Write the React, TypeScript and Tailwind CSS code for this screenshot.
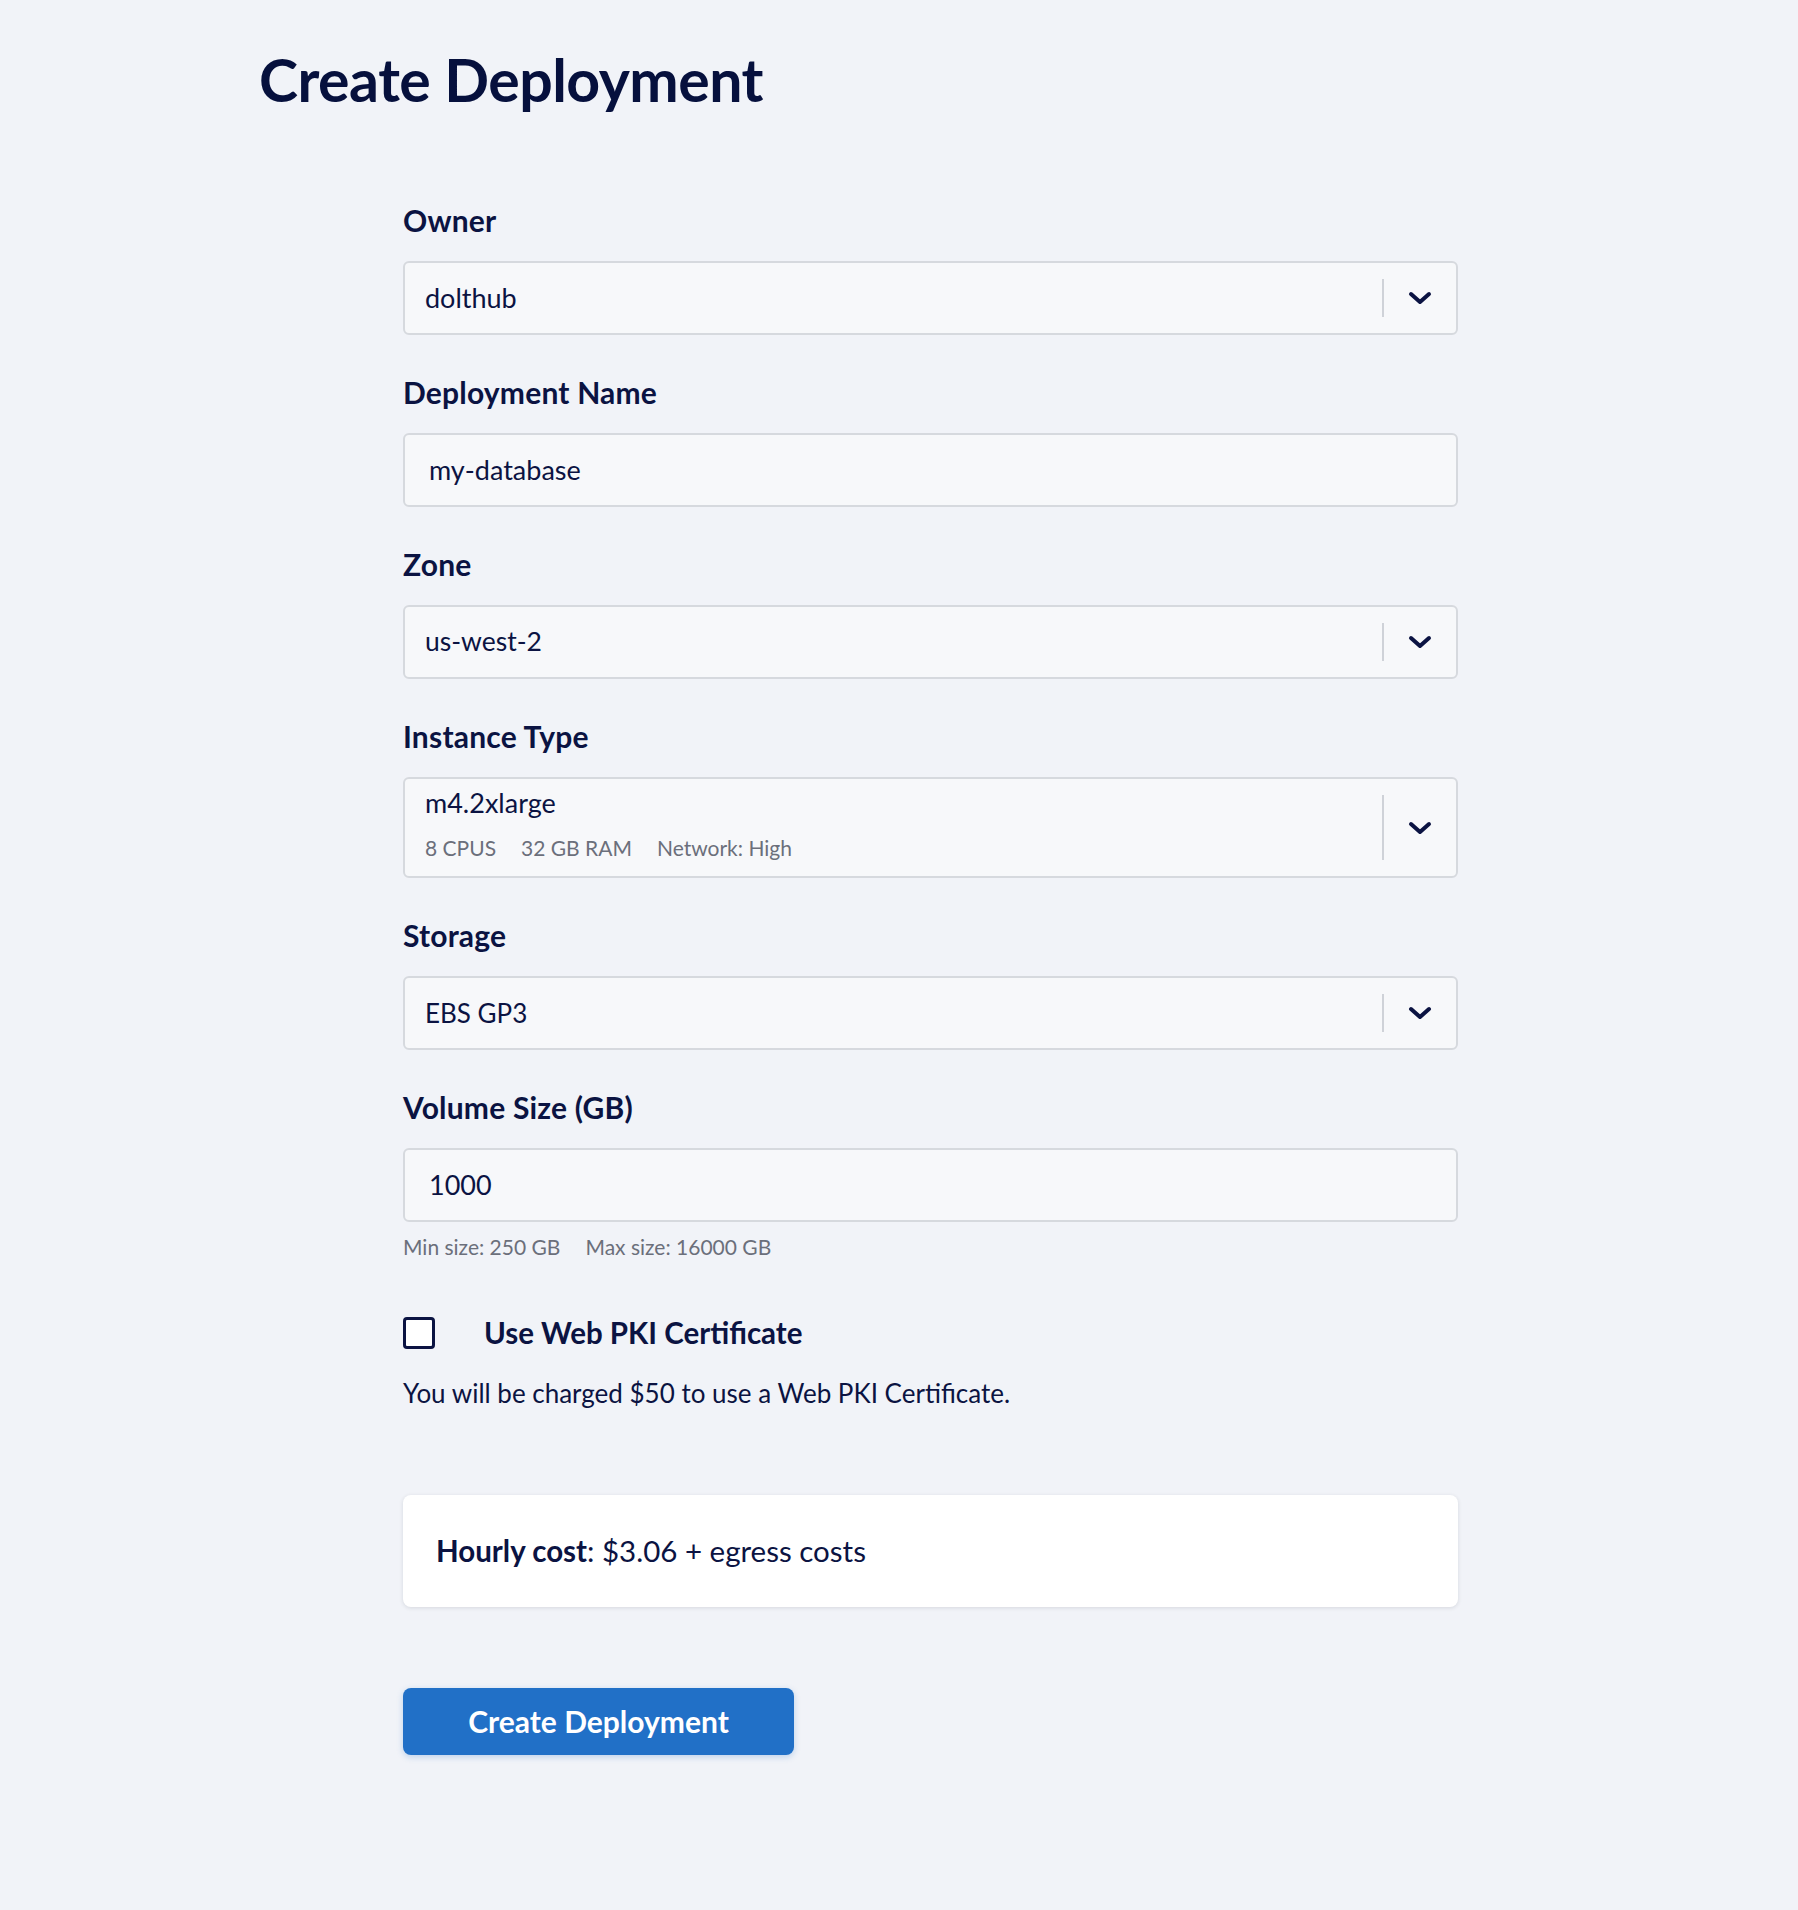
import type { ReactNode } from 'react'

function Chevron() {
  return (
    <svg width="24" height="14" viewBox="0 0 24 14" fill="none" className="text-[#0b1342]">
      <path d="M3 3l9 8 9-8" stroke="currentColor" strokeWidth="4" strokeLinecap="round" strokeLinejoin="round" />
    </svg>
  )
}

function Field({ label, children }: { label: string; children: ReactNode }) {
  return (
    <div className="mb-[39px]">
      <label className="block mb-[23px] text-[30px] leading-[36px] font-bold tracking-[0.2px] text-[#0b1342]">{label}</label>
      {children}
    </div>
  )
}

function SelectBox({ children, tall }: { children: ReactNode; tall?: boolean }) {
  return (
    <div
      className={`flex items-stretch bg-[#f7f8fa] border-2 border-[#d6d9de] rounded-[6px] ${
        tall ? 'h-[101px]' : 'h-[74px]'
      }`}
    >
      <div className={`flex-1 flex flex-col justify-center pl-[20px] ${tall ? 'pb-[4px]' : ''}`}>{children}</div>
      <div className="w-[2px] bg-[#cfd2d8] my-[16px]" />
      <div className="w-[72px] flex items-center justify-center">
        <Chevron />
      </div>
    </div>
  )
}

function TextInput({ value }: { value: string }) {
  return (
    <div className="h-[74px] flex items-center pl-[24px] bg-[#f7f8fa] border-2 border-[#d6d9de] rounded-[6px] text-[27px] text-[#0b1342]">
      {value}
    </div>
  )
}

export default function App() {
  return (
    <div className="min-h-screen bg-[#f1f3f8] font-[Lato,'Liberation_Sans',sans-serif] text-[#0b1342]">
      <div className="pl-[259px] pt-[44px]">
        <h1 className="text-[59px] leading-[72px] font-bold tracking-[-0.5px] text-[#06103d]">Create Deployment</h1>
      </div>

      <div className="ml-[403px] w-[1055px] mt-[86px]">
        <Field label="Owner">
          <SelectBox>
            <span className="text-[27px]">dolthub</span>
          </SelectBox>
        </Field>

        <Field label="Deployment Name">
          <TextInput value="my-database" />
        </Field>

        <Field label="Zone">
          <SelectBox>
            <span className="text-[26.5px]">us-west-2</span>
          </SelectBox>
        </Field>

        <Field label="Instance Type">
          <SelectBox tall>
            <span className="text-[27px] leading-[30px]">m4.2xlarge</span>
            <div className="flex gap-[25px] mt-[15px] text-[21px] leading-[30px] text-[#6b6f7b]">
              <span>8 CPUS</span>
              <span>32 GB RAM</span>
              <span>Network: High</span>
            </div>
          </SelectBox>
        </Field>

        <Field label="Storage">
          <SelectBox>
            <span className="text-[26px]">EBS GP3</span>
          </SelectBox>
        </Field>

        <div>
          <label className="block mb-[23px] text-[30px] leading-[36px] font-bold tracking-[0.2px] text-[#0b1342]">Volume Size (GB)</label>
          <TextInput value="1000" />
          <div className="flex gap-[25px] mt-[12px] text-[21px] leading-[26px] text-[#6b6f7b]">
            <span>Min size: 250 GB</span>
            <span>Max size: 16000 GB</span>
          </div>
        </div>

        <div className="flex items-center mt-[55px]">
          <div className="w-[32px] h-[32px] border-[3px] border-[#0b1342] rounded-[4px] bg-white" />
          <span className="ml-[49px] text-[29.5px] font-bold leading-[36px]">Use Web PKI Certificate</span>
        </div>
        <p className="mt-[25px] text-[26px] leading-[34px]">You will be charged $50 to use a Web PKI Certificate.</p>

        <div className="mt-[85px] h-[112px] flex items-center px-[33px] bg-white rounded-[8px] shadow-[0_1px_4px_rgba(15,23,42,0.12)] text-[29.5px]">
          <span className="font-bold">Hourly cost</span>
          <span>: $3.06 + egress costs</span>
        </div>

        <button className="mt-[81px] w-[391px] h-[67px] bg-[#2170c7] rounded-[8px] text-white text-[30px] font-bold shadow-[0_2px_6px_rgba(33,112,199,0.25)]">
          Create Deployment
        </button>
      </div>
    </div>
  )
}
